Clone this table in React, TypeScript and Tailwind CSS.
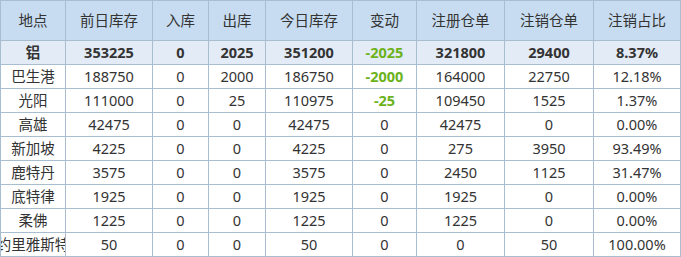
import React from "react";

const cols = [65, 87, 56, 57, 87, 64, 88, 89, 87];
const header = ["地点", "前日库存", "入库", "出库", "今日库存", "变动", "注册仓单", "注销仓单", "注销占比"];
const rows: string[][] = [
  ["铝", "353225", "0", "2025", "351200", "-2025", "321800", "29400", "8.37%"],
  ["巴生港", "188750", "0", "2000", "186750", "-2000", "164000", "22750", "12.18%"],
  ["光阳", "111000", "0", "25", "110975", "-25", "109450", "1525", "1.37%"],
  ["高雄", "42475", "0", "0", "42475", "0", "42475", "0", "0.00%"],
  ["新加坡", "4225", "0", "0", "4225", "0", "275", "3950", "93.49%"],
  ["鹿特丹", "3575", "0", "0", "3575", "0", "2450", "1125", "31.47%"],
  ["底特律", "1925", "0", "0", "1925", "0", "1925", "0", "0.00%"],
  ["柔佛", "1225", "0", "0", "1225", "0", "1225", "0", "0.00%"],
  ["约里雅斯特", "50", "0", "0", "50", "0", "0", "50", "100.00%"],
];

const font = { fontFamily: '"Noto Sans", "Noto Sans CJK SC", sans-serif' };

export default function App() {
  return (
    <div className="w-[681px] h-[257px] bg-white overflow-hidden" style={font}>
      <div
        className="grid border-t border-l border-[#a9bdd1] text-[#333] text-[14.5px]"
        style={{ gridTemplateColumns: cols.map((c) => `${c}px`).join(" ") }}
      >
        {header.map((h, i) => (
          <div
            key={"h" + i}
            className="h-[40px] bg-[#c7dcf0] border-r border-b border-[#a9bdd1] flex items-center justify-center whitespace-nowrap"
          >
            {h}
          </div>
        ))}
        {rows.map((r, ri) =>
          r.map((v, ci) => {
            const green = ci === 5 && v.startsWith("-");
            return (
              <div
                key={ri + "-" + ci}
                className={`h-[24px] border-r border-b border-[#a9bdd1] flex items-center justify-center whitespace-nowrap overflow-hidden ${
                  ri === 0 ? "bg-[#e3ecf6] font-bold" : "bg-white"
                } ${green ? "text-[#6cb21c] font-bold" : ""}`}
              >
                <span className="shrink-0">{v}</span>
              </div>
            );
          })
        )}
      </div>
    </div>
  );
}
